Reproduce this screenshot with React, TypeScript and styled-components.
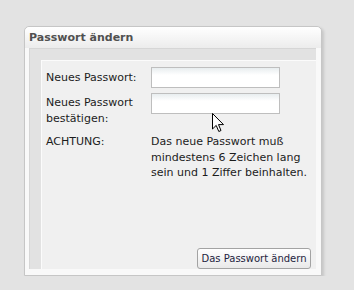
import { FC } from 'react'
import styled, { createGlobalStyle } from 'styled-components'

const GlobalStyle = createGlobalStyle`
  html, body {
    margin: 0;
    padding: 0;
    background: #e3e3e3;
    font-family: "DejaVu Sans", Verdana, sans-serif;
  }
`

const Page = styled.div`
  padding: 26px 0 0 24px;
`

const Panel = styled.section`
  width: 296px;
  border: 1px solid #c6c6c6;
  border-radius: 5px 5px 0 0;
  background: #f9f9f9;
  box-shadow: 2px 2px 3px rgba(0, 0, 0, 0.13);
`

const Header = styled.h2`
  margin: 0;
  height: 21px;
  padding-left: 4px;
  display: flex;
  align-items: center;
  font-size: 11px;
  font-weight: bold;
  color: #505050;
  border-radius: 5px 5px 0 0;
  background: linear-gradient(#ffffff, #ececec);
`

const Body = styled.div`
  padding: 0 5px 6px 4px;
`

const Fieldset = styled.div`
  border-top: 1px solid #d6d6d6;
  border-left: 1px solid #d6d6d6;
  background: #e2e2e2;
  padding: 11px 0 0 11px;
`

const Content = styled.div`
  position: relative;
  height: 209px;
  box-sizing: border-box;
  border-left: 1px solid #fbfbfb;
  border-top: 1px solid #fbfbfb;
  background: #f0f0f0;
  padding: 6px 5px 0 4px;
  display: flex;
  flex-direction: column;
`

const Form = styled.div`
  display: grid;
  grid-template-columns: 105px 129px;
  row-gap: 5px;
  font-size: 11px;
  line-height: 15.5px;
  color: #1c1c1c;
`

const Label = styled.label<{ $top?: number }>`
  padding-top: ${p => p.$top ?? 3}px;
`

const Input = styled.input`
  box-sizing: border-box;
  width: 129px;
  height: 21px;
  margin: 0;
  border: 1px solid #bebebe;
  background: linear-gradient(#e8edef 0, #ffffff 7px);
  outline: none;
`

const Note = styled.p`
  margin: 0;
  padding-top: 3px;
  width: 160px;
`

const Actions = styled.div`
  margin-top: auto;
  display: flex;
  justify-content: flex-end;
`

const Button = styled.button`
  box-sizing: border-box;
  width: 114px;
  height: 21px;
  padding: 0;
  border: 1px solid #a3a3a3;
  border-radius: 3px;
  background: linear-gradient(#ffffff, #e9e9e9);
  font-family: "DejaVu Sans", Verdana, sans-serif;
  font-size: 10px;
  white-space: nowrap;
  color: #1e2440;
`

const Cursor = styled.svg`
  position: absolute;
  left: 170px;
  top: 52px;
`

const App: FC = () => (
  <Page>
    <GlobalStyle />
    <Panel>
      <Header>Passwort ändern</Header>
      <Body>
        <Fieldset>
          <Content>
            <Form>
              <Label>Neues Passwort:</Label>
              <Input type="password" />
              <Label $top={2}>
                Neues Passwort
                <br />
                bestätigen:
              </Label>
              <Input type="password" />
              <Label $top={3}>ACHTUNG:</Label>
              <Note>Das neue Passwort muß mindestens 6 Zeichen lang sein und 1 Ziffer beinhalten.</Note>
            </Form>
            <Actions>
              <Button>Das Passwort ändern</Button>
            </Actions>
            <Cursor width="13" height="20" viewBox="0 0 13 20">
              <path
                d="M0.5 0.5 L0.5 16 L4.2 12.4 L6.8 18.5 L9 17.5 L6.5 11.6 L11.5 11.6 Z"
                fill="#fff"
                stroke="#000"
                strokeWidth="1"
                strokeLinejoin="round"
              />
            </Cursor>
          </Content>
        </Fieldset>
      </Body>
    </Panel>
  </Page>
)

export default App
